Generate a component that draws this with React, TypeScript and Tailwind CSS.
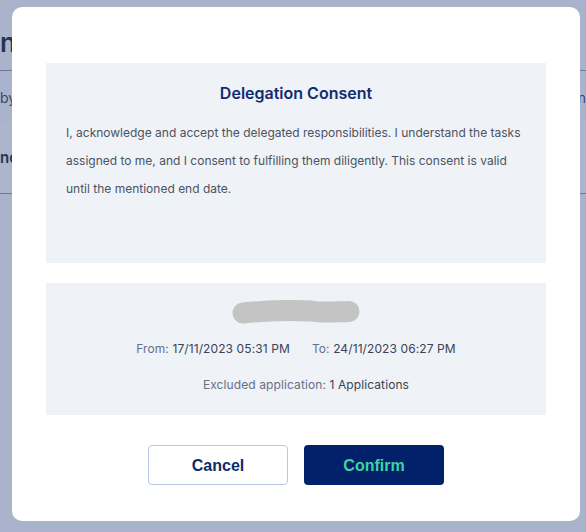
import React from "react";

function Blob() {
  return (
    <svg width="130" height="26" viewBox="0 0 130 26" className="block">
      <path
        d="M12 13 C 30 11, 60 10, 80 11 C 92 13, 100 12, 118 11.5"
        stroke="#c4c4c4"
        strokeWidth="21"
        strokeLinecap="round"
        fill="none"
      />
    </svg>
  );
}

export default function App() {
  return (
    <div
      className="relative w-full h-[532px] overflow-hidden bg-[#a9b4cc]"
      style={{ fontFamily: "Inter, 'Noto Sans', sans-serif" }}
    >
      {/* page behind the overlay */}
      <div className="flex flex-col text-[#26344f]">
        <div className="h-[70px] flex items-end pb-[14px]">
          <span className="text-[26px] font-semibold leading-none">n</span>
        </div>
        <div className="h-px bg-[#6d7894]" />
        <div className="h-[52px] flex items-center justify-between text-[14px] text-[#3a4660]">
          <span>by</span>
          <span>n</span>
        </div>
        <div className="h-[70px] flex items-center bg-[#abb6cd] text-[15px] font-semibold">
          <span>nc</span>
        </div>
        <div className="h-px bg-[#6d7894]" />
      </div>

      {/* modal */}
      <div className="absolute left-[12px] top-[7px] w-[568px] h-[514px] rounded-[10px] bg-white flex flex-col px-[34px] pt-[56px]">
        <div className="h-[200px] bg-[#eff2f7] px-[20px] pt-[18px]">
          <h2 className="text-center text-[16px] leading-[24px] font-semibold text-[#0f2b6e]">
            Delegation Consent
          </h2>
          <p className="mt-[14px] text-[12px] leading-[28px] text-[#4b5262]">
            I, acknowledge and accept the delegated responsibilities. I understand the tasks
            assigned to me, and I consent to fulfilling them diligently. This consent is valid
            until the mentioned end date.
          </p>
        </div>

        <div className="mt-[20px] h-[132px] bg-[#eff2f7] flex flex-col items-center pt-[17px]">
          <Blob />
          <div className="mt-[14px] flex gap-[22px] text-[12px] leading-[18px] tracking-[0.1px]">
            <span>
              <span className="text-[#64708a]">From: </span>
              <span className="text-[#3b4253]">17/11/2023 05:31 PM</span>
            </span>
            <span>
              <span className="text-[#64708a]">To: </span>
              <span className="text-[#3b4253]">24/11/2023 06:27 PM</span>
            </span>
          </div>
          <div className="mt-[18px] pl-[20px] text-[12px] leading-[18px] tracking-[0.1px]">
            <span className="text-[#64708a]">Excluded application: </span>
            <span className="text-[#3b4253]">1 Applications</span>
          </div>
        </div>

        <div
          className="mt-[30px] flex justify-center gap-[16px]"
          style={{ fontFamily: "'Liberation Sans', Arial, sans-serif" }}
        >
          <button className="w-[140px] h-[40px] pt-[2px] rounded-[4px] border border-[#b9c6e6] bg-white text-[16px] font-bold text-[#0f2b6e]">
            Cancel
          </button>
          <button className="w-[140px] h-[40px] pt-[2px] rounded-[4px] bg-[#03216a] text-[16px] font-bold text-[#3fd3a0]">
            Confirm
          </button>
        </div>
      </div>
    </div>
  );
}
